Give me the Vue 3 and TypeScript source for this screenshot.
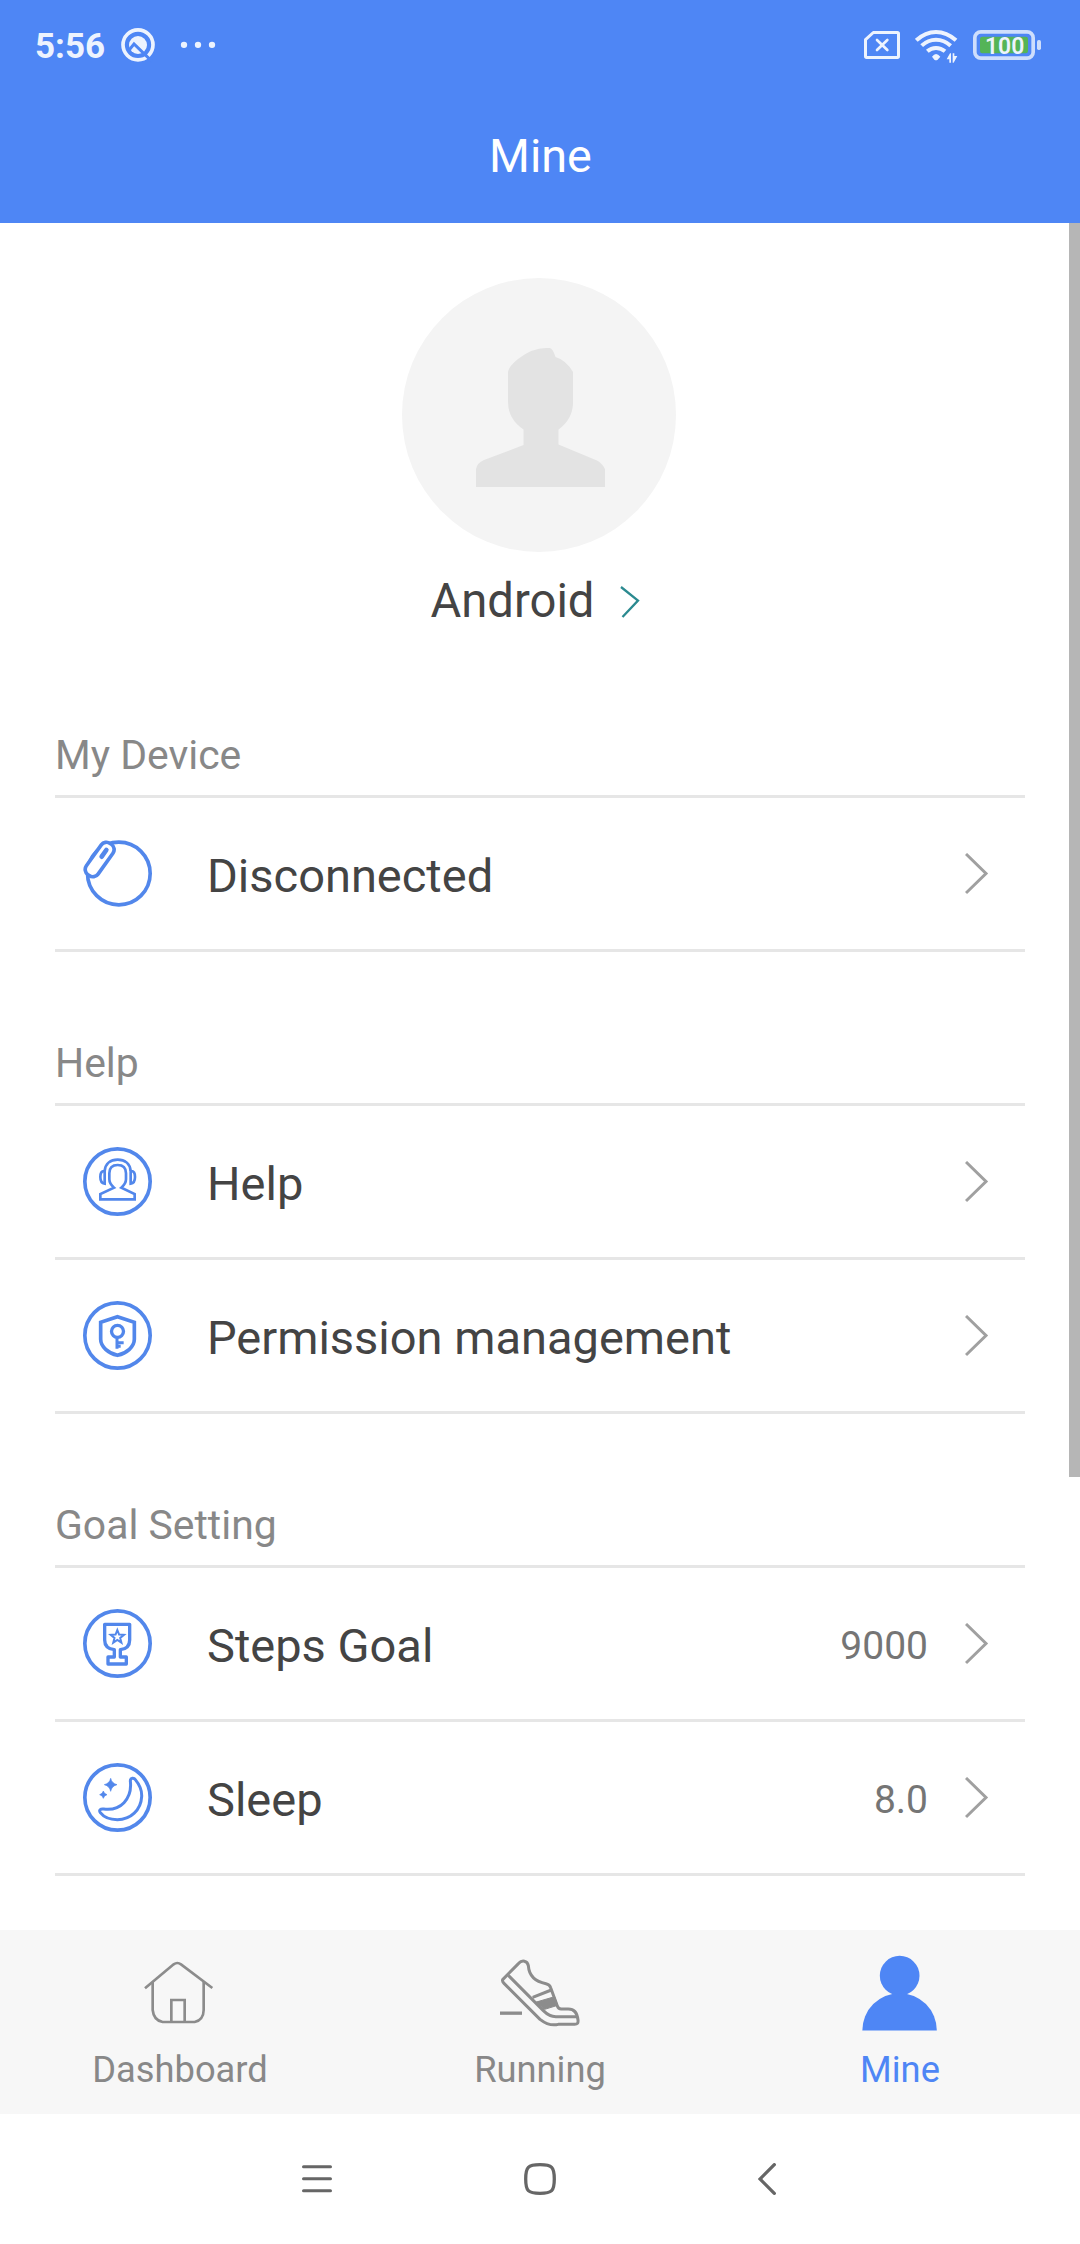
<script setup lang="ts">
interface Row {
  icon: 'device' | 'help' | 'permission' | 'steps' | 'sleep'
  label: string
  value?: string
}

interface Section {
  title: string
  rows: Row[]
}

const sections: Section[] = [
  { title: 'My Device', rows: [{ icon: 'device', label: 'Disconnected' }] },
  {
    title: 'Help',
    rows: [
      { icon: 'help', label: 'Help' },
      { icon: 'permission', label: 'Permission management' },
    ],
  },
  {
    title: 'Goal Setting',
    rows: [
      { icon: 'steps', label: 'Steps Goal', value: '9000' },
      { icon: 'sleep', label: 'Sleep', value: '8.0' },
    ],
  },
]
</script>

<template>
  <div class="screen">
    <header class="header">
      <div class="status">
        <span class="time">5:56</span>
        <svg class="q-icon" width="34" height="36" viewBox="363 84 102 108">
          <circle cx="414" cy="134.500" r="45" fill="none" stroke="#fff" stroke-width="11" />
          <circle cx="414" cy="135" r="27" fill="#fff" />
          <path d="M386 152L402 132L456 184" fill="none" stroke="#4e86f5" stroke-width="9" />
        </svg>
        <svg class="dots" width="36" height="36" viewBox="540 84 108 108">
          <circle cx="552" cy="134.500" r="9.500" fill="#fff" />
          <circle cx="594" cy="134.500" r="9.500" fill="#fff" />
          <circle cx="636" cy="134.500" r="9.500" fill="#fff" />
        </svg>
        <div class="status-right">
          <svg width="36" height="36" viewBox="72 84 108 108" fill="none" stroke="#fff" stroke-linejoin="round">
            <path d="M100 97.500H172Q175.500 97.500 175.500 101V169Q175.500 172.500 172 172.500H80Q76.500 172.500 76.500 169V119Z" stroke-width="9" />
            <path d="M111 120L142 150M142 120L111 150" stroke-width="8" stroke-linecap="round" />
          </svg>
          <svg width="43" height="36" viewBox="225 84 129 108" fill="none" stroke="#fff">
            <path d="M229 121Q256 96 288 96T348 121" stroke-width="12" />
            <path d="M245 137Q264 119 288 119T332 137" stroke-width="12" />
            <path d="M262 154Q273 144 288 144T315 154" stroke-width="12" />
            <path d="M276 170Q288 154 301 170L293 179Q288 182 283 179Z" fill="#fff" stroke="none" />
            <path d="M333 160V188H328V178H320L330 160ZM338 188V160H343V168H352L341 188Z" fill="#fff" stroke="none" />
          </svg>
          <svg width="68" height="36" viewBox="399 84 204 108">
            <rect x="404.500" y="95.500" width="175" height="79" rx="18" fill="none" stroke="#dce8fd" stroke-width="11" />
            <rect x="420" y="110" width="144" height="50" rx="7" fill="#55b947" />
            <rect x="591" y="120" width="12" height="30" rx="5" fill="#dce8fd" />
            <text x="494" y="162" text-anchor="middle" class="battery-text">100</text>
          </svg>
        </div>
      </div>
      <h1 class="title">Mine</h1>
    </header>

    <main class="content">
      <section class="profile">
        <svg class="avatar" width="274" height="274" viewBox="402 278 274 274">
          <circle cx="539" cy="415" r="137" fill="#f4f4f4" />
          <path d="M476 487V469Q477 463 484 460L523.500 445V429.500Q508 419 508 402V372Q509 366 518 359Q532 348 546 348H550Q553 349 555.500 357Q566 360 573 372V404Q572 420 558.500 429.500V444.500L597 460.500Q602 463 605 469V487Z" fill="#e3e3e3" />
        </svg>
        <div class="name-row">
          <span>Android</span>
          <svg width="38" height="36" viewBox="612 584 38 36" fill="none" stroke="#2b8a90" stroke-width="2.300">
            <path d="M621 587L638 600.500L622.500 617" />
          </svg>
        </div>
      </section>

      <section v-for="section in sections" :key="section.title">
        <h2 class="section-title">{{ section.title }}</h2>
        <div v-for="row in section.rows" :key="row.label" class="row">
          <svg v-if="row.icon === 'device'" class="row-icon" viewBox="129 357 207 207">
            <circle cx="236.500" cy="460.500" r="94" stroke-width="11" />
            <rect x="157.500" y="361" width="43" height="115" rx="19" stroke-width="11" fill="#fff" transform="rotate(35.500 179 418.500)" />
            <path d="M199 390L185 410" stroke-width="14" stroke-linecap="round" />
          </svg>
          <svg v-else-if="row.icon === 'help'" class="row-icon" viewBox="69 81 207 207">
            <circle cx="172.500" cy="184.500" r="98" stroke-width="11" />
            <g stroke-width="8">
              <path d="M148 160C148 143 158 135 173 135S198 143 198 160V178C198 190 192 196 184 203L224 222V238H121V222L162 203C154 196 148 190 148 178Z" />
              <path d="M134 153C136 130 152 119 173 119S210 130 212 153" />
              <path d="M134 153C124 152 121 160 121 171S124 190 134 191ZM212 153C222 152 225 160 225 171S222 190 212 191Z" />
            </g>
          </svg>
          <svg v-else-if="row.icon === 'permission'" class="row-icon" viewBox="69 543 207 207">
            <circle cx="172.500" cy="646.500" r="98" stroke-width="11" />
            <path d="M172.500 590L223 607V658C223 680 200 700 172.500 706C145 700 122 680 122 658V607Z" stroke-width="11" />
            <circle cx="172.500" cy="634" r="18" stroke-width="10" />
            <path d="M171 652V686M171 668H191M171 679H182" stroke-width="9" />
          </svg>
          <svg v-else-if="row.icon === 'steps'" class="row-icon" viewBox="69 87 207 207">
            <circle cx="172.500" cy="190.500" r="98" stroke-width="11" />
            <path d="M134 133H209V180C209 196 200 207 181 209V231H199V252H144V231H163V209C144 207 134 196 134 180Z" stroke-width="10" stroke-linejoin="round" />
            <path d="M172 150L177.300 163.700L192 164.500L180.600 173.800L184.300 188L172 180L159.700 188L163.400 173.800L152 164.500L166.700 163.700Z" stroke-width="6" />
          </svg>
          <svg v-else class="row-icon" viewBox="69 549 207 207">
            <circle cx="172.500" cy="652.500" r="98" stroke-width="11" />
            <path d="M211 603C211 593 222 593 226 599C240 616 246 634 245 650C243 690 212 719 172 719C150 719 131 711 121 698C116 690 121 686 131 687C155 690 176 685 192 668C211 648 214 628 211 603Z" stroke-width="9" />
            <path d="M152 595Q155 610 171 614Q155 618 152 634Q149 618 133 614Q149 610 152 595ZM130 633Q132 642 141 644Q132 646 130 655Q128 646 119 644Q128 642 130 633Z" stroke-width="2" fill="#5287eb" />
          </svg>
          <span class="row-label">{{ row.label }}</span>
          <span v-if="row.value" class="row-value">{{ row.value }}</span>
          <svg class="chevron" width="24" height="42" viewBox="0 0 24 42" fill="none" stroke="#a0a0a0" stroke-width="3">
            <path d="M1 1L21 20.500L1 40" />
          </svg>
        </div>
      </section>
      <div class="scroll-thumb"></div>
    </main>

    <nav class="tabs">
      <div class="tab">
        <svg width="84" height="84" viewBox="234 96 252 252" fill="none" stroke="#8c8c8c" stroke-width="8">
          <path d="M255 205L341 133Q352 125 363 133L457 204" />
          <path d="M278 186V270C280 290 292 303 308 306H404C420 303 431 290 431 270V186" />
          <path d="M334 306V240H374V306" />
        </svg>
        <span>Dashboard</span>
      </div>
      <div class="tab">
        <svg width="84" height="84" viewBox="174 96 252 252" fill="none" stroke="#8c8c8c" stroke-width="9" stroke-linejoin="round">
          <path d="M188 179L236 130C246 119 262 122 265 137C267 165 285 185 318 191C328 193 330 196 332 203L352 258C354 264 358 268 366 267H385C403 267 412 280 414 300C415 310 412 313 404 313H355C335 318 318 312 300 298L192 190Q186 184 188 179Z" />
          <path d="M205 166L310 272C322 284 332 291 350 290H411M278 232L334 210" />
          <path d="M286 247L344 230L353 256L314 268Z" fill="#8c8c8c" stroke-width="3" />
          <path d="M180 279.500H246" stroke-width="10" />
        </svg>
        <span>Running</span>
      </div>
      <div class="tab active">
        <svg width="84" height="84" viewBox="114 96 252 252" fill="#4e86f5">
          <circle cx="239" cy="167" r="59.500" />
          <path d="M127 331.500A111.750 112 0 0 1 350.500 331.500Z" />
        </svg>
        <span>Mine</span>
      </div>
    </nav>

    <footer class="system-nav">
      <svg width="30" height="32" viewBox="0 0 30 32" fill="none" stroke="#666" stroke-width="3" stroke-linecap="round">
        <path d="M1.500 3.700H28.500M1.500 15.700H28.500M1.500 27.700H28.500" />
      </svg>
      <svg class="home" width="32" height="32" viewBox="0 0 32 32" fill="none" stroke="#666" stroke-width="3.300">
        <path d="M16 1.700C28 1.700 30.300 4 30.300 16S28 30.300 16 30.300S1.700 28 1.700 16S4 1.700 16 1.700Z" />
      </svg>
      <svg width="18" height="32" viewBox="0 0 18 32" fill="none" stroke="#666" stroke-width="3.300" stroke-linecap="round">
        <path d="M16.300 1.700L2 16L16.300 30.300" />
      </svg>
    </footer>
  </div>
</template>

<style>
body {
  margin: 0;
  background: #fff;
}
</style>

<style scoped>
.screen {
  width: 1080px;
  height: 2244px;
  display: flex;
  flex-direction: column;
  overflow: hidden;
  background: #fff;
  font-family: Roboto, "Noto Sans", sans-serif;
  color: #444;
}

svg {
  display: block;
  flex: none;
}

.header {
  flex: none;
  height: 223px;
  background: #4e86f5;
  color: #fff;
}

.status {
  box-sizing: border-box;
  height: 90px;
  padding: 28px 39px 0 35px;
  display: flex;
  align-items: flex-start;
  opacity: 0.9;
}

.time {
  width: 86px;
  font-size: 35px;
  line-height: 37px;
  font-weight: 700;
}

.dots {
  margin-left: 25px;
}

.status-right {
  margin-left: auto;
  display: flex;
  gap: 15px;
}

.battery-text {
  font-size: 69px;
  font-weight: 600;
  fill: #fff;
}

.title {
  margin: 0;
  padding-left: 1px;
  font-size: 46.750px;
  font-weight: 400;
  line-height: 133px;
  text-align: center;
}

.content {
  position: relative;
  flex: 1;
}

.scroll-thumb {
  position: absolute;
  top: 0;
  right: 0;
  width: 11px;
  height: 1254px;
  background: #b6b6b6;
}

.profile {
  box-sizing: border-box;
  height: 421px;
  padding-top: 55px;
}

.avatar {
  margin-left: 402px;
}

.name-row {
  margin-top: 22px;
  padding-left: 1px;
  display: flex;
  justify-content: center;
  align-items: center;
  gap: 18px;
  font-size: 47.200px;
  line-height: 55px;
}

.section-title {
  box-sizing: border-box;
  height: 154px;
  margin: 0 55px;
  padding-bottom: 16px;
  display: flex;
  align-items: flex-end;
  border-bottom: 3px solid #e6e6e6;
  font-size: 40.900px;
  font-weight: 400;
  line-height: 48px;
  color: #888;
}

.row {
  box-sizing: border-box;
  height: 154px;
  margin: 0 55px;
  padding: 0 36px 0 28px;
  display: flex;
  align-items: center;
  border-bottom: 3px solid #e6e6e6;
}

.row-icon {
  width: 69px;
  height: 69px;
  fill: none;
  stroke: #5287eb;
}

.row-label {
  flex: 1;
  margin-left: 55px;
  padding-top: 3px;
  font-size: 47px;
  line-height: 55px;
}

.row-value {
  padding-top: 5px;
  font-size: 39px;
  line-height: 46px;
  color: #757575;
}

.chevron {
  margin-left: 37px;
}

.tabs {
  flex: none;
  height: 184px;
  display: flex;
  background: #f7f7f7;
}

.tab {
  flex: 1;
  padding-top: 22px;
  display: flex;
  flex-direction: column;
  align-items: center;
  gap: 13px;
  font-size: 36.300px;
  line-height: 42px;
  color: #888;
}

.tab.active {
  color: #4e86f5;
}

.system-nav {
  flex: none;
  box-sizing: border-box;
  height: 130px;
  padding-left: 302px;
  display: flex;
  align-items: center;
}

.home {
  margin: 0 202px 0 192px;
}
</style>
